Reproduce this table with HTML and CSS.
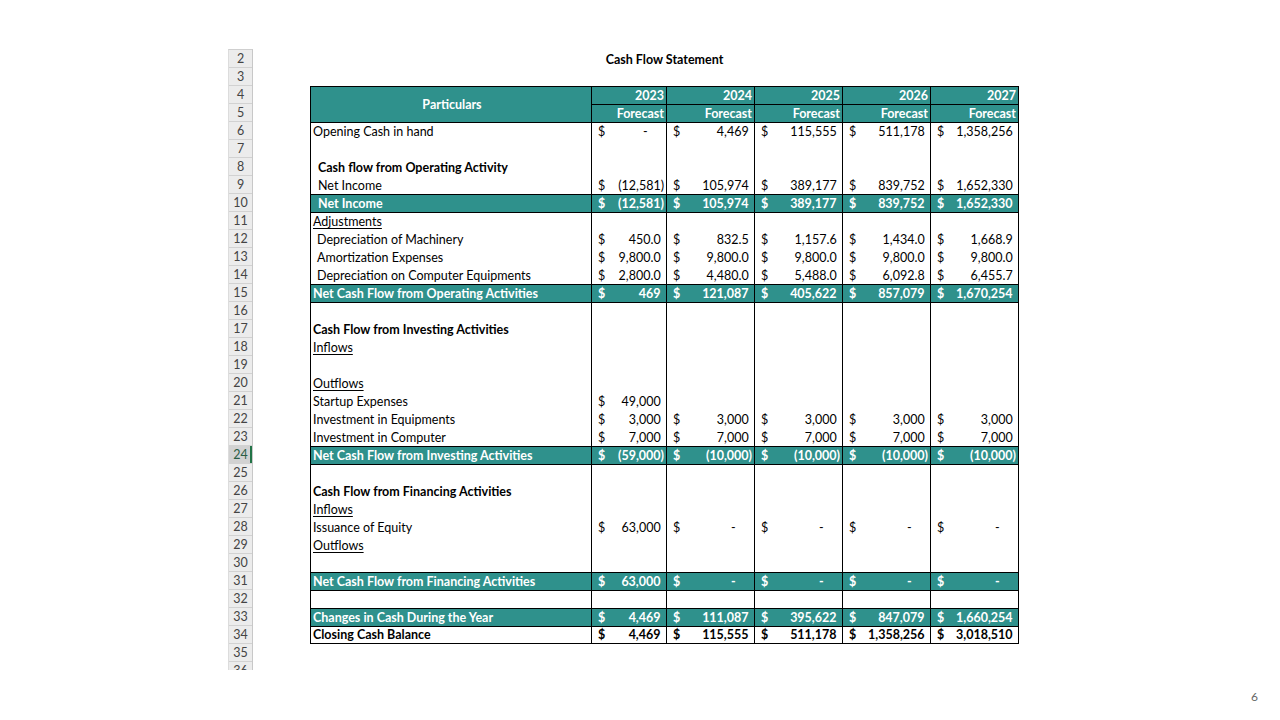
FILE: index.html
```html
<!DOCTYPE html>
<html lang="en">
<head>
<meta charset="utf-8">
<title>Cash Flow Statement</title>
<link rel="stylesheet" href="styles.css">
</head>
<body>
<div class="page">
  <div class="sheet-area">
    <div class="rh">
      <div>2</div><div>3</div><div>4</div><div>5</div><div>6</div><div>7</div><div>8</div><div>9</div><div>10</div><div>11</div><div>12</div><div>13</div><div>14</div><div>15</div><div>16</div><div>17</div><div>18</div><div>19</div><div>20</div><div>21</div><div>22</div><div>23</div><div class="sel">24</div><div>25</div><div>26</div><div>27</div><div>28</div><div>29</div><div>30</div><div>31</div><div>32</div><div>33</div><div>34</div><div>35</div><div>36</div>
    </div>
    <div class="sheet">
      <div class="title">Cash Flow Statement</div>
      <div class="blank"></div>
      <div class="tbl">
        <div class="row head">
          <div class="c part">Particulars</div>
          <div class="c yr">2023</div><div class="c yr">2024</div><div class="c yr">2025</div><div class="c yr">2026</div><div class="c yr">2027</div>
          <div class="c fc">Forecast</div><div class="c fc">Forecast</div><div class="c fc">Forecast</div><div class="c fc">Forecast</div><div class="c fc">Forecast</div>
        </div>

        <div class="row lt">
          <div class="c l">Opening Cash in hand</div>
          <div class="c a"><span>$</span><span class="z">-<i>)</i></span></div>
          <div class="c a"><span>$</span><span>4,469<i>)</i></span></div>
          <div class="c a"><span>$</span><span>115,555<i>)</i></span></div>
          <div class="c a"><span>$</span><span>511,178<i>)</i></span></div>
          <div class="c a"><span>$</span><span>1,358,256<i>)</i></span></div>
        </div>

        <div class="row"><div class="c l"></div><div class="c"></div><div class="c"></div><div class="c"></div><div class="c"></div><div class="c"></div></div>

        <div class="row">
          <div class="c l in b">Cash flow from Operating Activity</div>
          <div class="c"></div><div class="c"></div><div class="c"></div><div class="c"></div><div class="c"></div>
        </div>

        <div class="row">
          <div class="c l in">Net Income</div>
          <div class="c a"><span>$</span><span>(12,581)</span></div>
          <div class="c a"><span>$</span><span>105,974<i>)</i></span></div>
          <div class="c a"><span>$</span><span>389,177<i>)</i></span></div>
          <div class="c a"><span>$</span><span>839,752<i>)</i></span></div>
          <div class="c a"><span>$</span><span>1,652,330<i>)</i></span></div>
        </div>

        <div class="row teal">
          <div class="c l in">Net Income</div>
          <div class="c a"><span>$</span><span>(12,581)</span></div>
          <div class="c a"><span>$</span><span>105,974<i>)</i></span></div>
          <div class="c a"><span>$</span><span>389,177<i>)</i></span></div>
          <div class="c a"><span>$</span><span>839,752<i>)</i></span></div>
          <div class="c a"><span>$</span><span>1,652,330<i>)</i></span></div>
        </div>

        <div class="row lt">
          <div class="c l u">Adjustments</div>
          <div class="c"></div><div class="c"></div><div class="c"></div><div class="c"></div><div class="c"></div>
        </div>

        <div class="row">
          <div class="c l in2">Depreciation of Machinery</div>
          <div class="c a"><span>$</span><span>450.0<i>)</i></span></div>
          <div class="c a"><span>$</span><span>832.5<i>)</i></span></div>
          <div class="c a"><span>$</span><span>1,157.6<i>)</i></span></div>
          <div class="c a"><span>$</span><span>1,434.0<i>)</i></span></div>
          <div class="c a"><span>$</span><span>1,668.9<i>)</i></span></div>
        </div>

        <div class="row">
          <div class="c l in2">Amortization Expenses</div>
          <div class="c a"><span>$</span><span>9,800.0<i>)</i></span></div>
          <div class="c a"><span>$</span><span>9,800.0<i>)</i></span></div>
          <div class="c a"><span>$</span><span>9,800.0<i>)</i></span></div>
          <div class="c a"><span>$</span><span>9,800.0<i>)</i></span></div>
          <div class="c a"><span>$</span><span>9,800.0<i>)</i></span></div>
        </div>

        <div class="row">
          <div class="c l in2">Depreciation on Computer Equipments</div>
          <div class="c a"><span>$</span><span>2,800.0<i>)</i></span></div>
          <div class="c a"><span>$</span><span>4,480.0<i>)</i></span></div>
          <div class="c a"><span>$</span><span>5,488.0<i>)</i></span></div>
          <div class="c a"><span>$</span><span>6,092.8<i>)</i></span></div>
          <div class="c a"><span>$</span><span>6,455.7<i>)</i></span></div>
        </div>

        <div class="row teal">
          <div class="c l">Net Cash Flow from Operating Activities</div>
          <div class="c a"><span>$</span><span>469<i>)</i></span></div>
          <div class="c a"><span>$</span><span>121,087<i>)</i></span></div>
          <div class="c a"><span>$</span><span>405,622<i>)</i></span></div>
          <div class="c a"><span>$</span><span>857,079<i>)</i></span></div>
          <div class="c a"><span>$</span><span>1,670,254<i>)</i></span></div>
        </div>

        <div class="row lt"><div class="c l"></div><div class="c"></div><div class="c"></div><div class="c"></div><div class="c"></div><div class="c"></div></div>

        <div class="row">
          <div class="c l b">Cash Flow from Investing Activities</div>
          <div class="c"></div><div class="c"></div><div class="c"></div><div class="c"></div><div class="c"></div>
        </div>

        <div class="row">
          <div class="c l u">Inflows</div>
          <div class="c"></div><div class="c"></div><div class="c"></div><div class="c"></div><div class="c"></div>
        </div>

        <div class="row"><div class="c l"></div><div class="c"></div><div class="c"></div><div class="c"></div><div class="c"></div><div class="c"></div></div>

        <div class="row">
          <div class="c l u">Outflows</div>
          <div class="c"></div><div class="c"></div><div class="c"></div><div class="c"></div><div class="c"></div>
        </div>

        <div class="row">
          <div class="c l">Startup Expenses</div>
          <div class="c a"><span>$</span><span>49,000<i>)</i></span></div>
          <div class="c"></div><div class="c"></div><div class="c"></div><div class="c"></div>
        </div>

        <div class="row">
          <div class="c l">Investment in Equipments</div>
          <div class="c a"><span>$</span><span>3,000<i>)</i></span></div>
          <div class="c a"><span>$</span><span>3,000<i>)</i></span></div>
          <div class="c a"><span>$</span><span>3,000<i>)</i></span></div>
          <div class="c a"><span>$</span><span>3,000<i>)</i></span></div>
          <div class="c a"><span>$</span><span>3,000<i>)</i></span></div>
        </div>

        <div class="row">
          <div class="c l">Investment in Computer</div>
          <div class="c a"><span>$</span><span>7,000<i>)</i></span></div>
          <div class="c a"><span>$</span><span>7,000<i>)</i></span></div>
          <div class="c a"><span>$</span><span>7,000<i>)</i></span></div>
          <div class="c a"><span>$</span><span>7,000<i>)</i></span></div>
          <div class="c a"><span>$</span><span>7,000<i>)</i></span></div>
        </div>

        <div class="row teal">
          <div class="c l">Net Cash Flow from Investing Activities</div>
          <div class="c a"><span>$</span><span>(59,000)</span></div>
          <div class="c a"><span>$</span><span>(10,000)</span></div>
          <div class="c a"><span>$</span><span>(10,000)</span></div>
          <div class="c a"><span>$</span><span>(10,000)</span></div>
          <div class="c a"><span>$</span><span>(10,000)</span></div>
        </div>

        <div class="row lt"><div class="c l"></div><div class="c"></div><div class="c"></div><div class="c"></div><div class="c"></div><div class="c"></div></div>

        <div class="row">
          <div class="c l b">Cash Flow from Financing Activities</div>
          <div class="c"></div><div class="c"></div><div class="c"></div><div class="c"></div><div class="c"></div>
        </div>

        <div class="row">
          <div class="c l u">Inflows</div>
          <div class="c"></div><div class="c"></div><div class="c"></div><div class="c"></div><div class="c"></div>
        </div>

        <div class="row">
          <div class="c l">Issuance of Equity</div>
          <div class="c a"><span>$</span><span>63,000<i>)</i></span></div>
          <div class="c a"><span>$</span><span class="z">-<i>)</i></span></div>
          <div class="c a"><span>$</span><span class="z">-<i>)</i></span></div>
          <div class="c a"><span>$</span><span class="z">-<i>)</i></span></div>
          <div class="c a"><span>$</span><span class="z">-<i>)</i></span></div>
        </div>

        <div class="row">
          <div class="c l u">Outflows</div>
          <div class="c"></div><div class="c"></div><div class="c"></div><div class="c"></div><div class="c"></div>
        </div>

        <div class="row"><div class="c l"></div><div class="c"></div><div class="c"></div><div class="c"></div><div class="c"></div><div class="c"></div></div>

        <div class="row teal">
          <div class="c l">Net Cash Flow from Financing Activities</div>
          <div class="c a"><span>$</span><span>63,000<i>)</i></span></div>
          <div class="c a"><span>$</span><span class="z">-<i>)</i></span></div>
          <div class="c a"><span>$</span><span class="z">-<i>)</i></span></div>
          <div class="c a"><span>$</span><span class="z">-<i>)</i></span></div>
          <div class="c a"><span>$</span><span class="z">-<i>)</i></span></div>
        </div>

        <div class="row lt"><div class="c l"></div><div class="c"></div><div class="c"></div><div class="c"></div><div class="c"></div><div class="c"></div></div>

        <div class="row teal">
          <div class="c l">Changes in Cash During the Year</div>
          <div class="c a"><span>$</span><span>4,469<i>)</i></span></div>
          <div class="c a"><span>$</span><span>111,087<i>)</i></span></div>
          <div class="c a"><span>$</span><span>395,622<i>)</i></span></div>
          <div class="c a"><span>$</span><span>847,079<i>)</i></span></div>
          <div class="c a"><span>$</span><span>1,660,254<i>)</i></span></div>
        </div>

        <div class="row lt last bold">
          <div class="c l">Closing Cash Balance</div>
          <div class="c a"><span>$</span><span>4,469<i>)</i></span></div>
          <div class="c a"><span>$</span><span>115,555<i>)</i></span></div>
          <div class="c a"><span>$</span><span>511,178<i>)</i></span></div>
          <div class="c a"><span>$</span><span>1,358,256<i>)</i></span></div>
          <div class="c a"><span>$</span><span>3,018,510<i>)</i></span></div>
        </div>
      </div>
    </div>
  </div>
  <div class="footer">6</div>
</div>
</body>
</html>
```
FILE: styles.css
```css
* { box-sizing: border-box; }
html, body { margin: 0; padding: 0; background: #fff; }
body { font-family: "Lato", "Open Sans", sans-serif; color: #000; }

.page {
  width: 1280px;
  height: 720px;
  display: flex;
  flex-direction: column;
}

.sheet-area {
  display: flex;
  align-items: flex-start;
  padding-top: 49px;
  padding-left: 228px;
}

.rh {
  width: 25px;
  height: 621px;
  overflow: hidden;
  border-top: 1px solid #cfcfcf;
  background: #ececec;
  border-right: 1px solid #c8c8c8;
  border-left: 1px solid #dcdcdc;
}
.rh > div {
  height: 18px;
  border-bottom: 1px solid #d2d2d2;
  text-align: center;
  font-size: 12.5px;
  line-height: 18px;
  color: #444;
}
.rh > div.sel {
  background: #d2d2d2;
  box-shadow: inset -2px 0 0 #217346;
  color: #2a5d45;
}

.sheet {
  margin-left: 57px;
  margin-top: 1px;
  width: 709px;
  font-size: 12.5px;
}
.title {
  height: 18px;
  line-height: 20px;
  text-align: center;
  font-weight: bold;
}
.blank { height: 18px; }

.tbl {
  display: grid;
  grid-template-columns: 282px 75px 88px 88px 88px 88px;
  grid-auto-rows: 18px;
}
.row { display: contents; }
.c {
  border-right: 1px solid #000;
  padding-top: 1px;
  line-height: 17px;
  white-space: nowrap;
  overflow: hidden;
}
.c.l, .c.part { border-left: 1px solid #000; padding-left: 2px; }
.c.in { padding-left: 7px; }
.c.in2 { padding-left: 6px; }
.c.b { font-weight: bold; }
.c.u { text-decoration: underline; text-underline-offset: 2px; }

.c.a {
  display: flex;
  justify-content: space-between;
  padding-left: 6px;
  padding-right: 2px;
}
.c.a i { visibility: hidden; font-style: normal; }
.c.a .z { padding-right: 13px; }

.head .c {
  background: #2f918c;
  color: #fff;
  font-weight: bold;
  border-top: 1px solid #000;
  padding-top: 0;
}
.head .part {
  grid-row: span 2;
  display: flex;
  align-items: center;
  justify-content: center;
}
.head .yr, .head .fc { text-align: right; padding-right: 2px; }

.row.lt > .c { border-top: 1px solid #000; padding-top: 0; }
.row.teal > .c {
  border-top: 1px solid #000;
  padding-top: 0;
  background: #2f918c;
  color: #fff;
  font-weight: bold;
}
.row.last > .c { border-bottom: 1px solid #000; line-height: 16px; }
.row.bold > .c { font-weight: bold; }

.footer {
  margin-top: auto;
  padding: 0 22px 16px 0;
  text-align: right;
  font-size: 12px;
  color: #666;
}
```
